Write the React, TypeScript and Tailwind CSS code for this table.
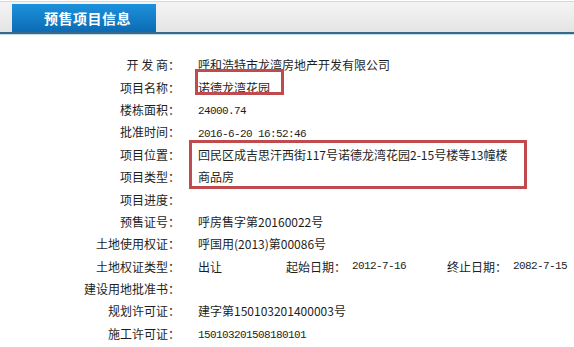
const rows: { label: string; value?: string; mono?: boolean }[] = [
  { label: "开 发 商：", value: "呼和浩特市龙湾房地产开发有限公司" },
  { label: "项目名称：", value: "诺德龙湾花园" },
  { label: "楼栋面积：", value: "24000.74", mono: true },
  { label: "批准时间：", value: "2016-6-20 16:52:46", mono: true },
  { label: "项目位置：", value: "回民区成吉思汗西街117号诺德龙湾花园2-15号楼等13幢楼" },
  { label: "项目类型：", value: "商品房" },
  { label: "项目进度：" },
  { label: "预售证号：", value: "呼房售字第20160022号" },
  { label: "土地使用权证：", value: "呼国用(2013)第00086号" },
  { label: "土地权证类型：" },
  { label: "建设用地批准书：" },
  { label: "规划许可证：", value: "建字第150103201400003号" },
  { label: "施工许可证：", value: "150103201508180101", mono: true },
];

const mono = "font-['Liberation_Mono','Noto_Sans_CJK_SC',monospace] text-[11px] tracking-[-0.6px]";

export default function App() {
  return (
    <div className="w-[574px] h-[347px] bg-white overflow-hidden font-['Noto_Sans_CJK_SC',sans-serif] text-[12px] text-[#1e1e1e]">
      {/* header */}
      <div className="h-px mt-px bg-[#d8d8d8]" />
      <div className="h-[30px] bg-gradient-to-b from-[#f4f4f4] to-[#e4e4e4] flex items-end pl-3">
        <div className="w-[144px] h-[28px] bg-gradient-to-b from-[#1c92dc] to-[#0c6bb4] text-white font-bold text-[14px] leading-[28px] pl-[32px] tracking-[0.5px]">
          预售项目信息
        </div>
      </div>
      <div className="h-[2px] bg-[#3a6985]" />
      <div className="h-px bg-[#bfe0f4]" />

      <div className="relative pt-[19px]">
        {rows.map((r, i) => (
          <div key={i} className="flex h-[22.4px] items-center">
            <div className="w-[181px] text-right pr-[1px] shrink-0">{r.label}</div>
            <div className="pl-[17px] whitespace-nowrap">
              {i === 9 ? (
                <div className="flex items-center">
                  <span className="w-[88px]">出让</span>
                  <span>起始日期：</span>
                  <span className={`${mono} ml-[6px] w-[95px]`}>2012-7-16</span>
                  <span>终止日期：</span>
                  <span className={`${mono} ml-[6px]`}>2082-7-15</span>
                </div>
              ) : (
                <span className={r.mono ? mono : ""}>{r.value}</span>
              )}
            </div>
          </div>
        ))}

        {/* red annotation boxes */}
        <div className="absolute left-[195px] top-[34px] w-[89px] h-[26px] border-[3px] border-[#bf4b4e]" />
        <div className="absolute left-[189px] top-[105px] w-[338px] h-[49px] border-[3px] border-[#bf4b4e]" />
      </div>
    </div>
  );
}
